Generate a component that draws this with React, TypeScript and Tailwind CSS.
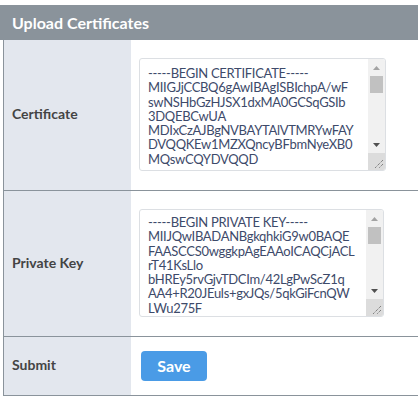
import { useState } from "react"

const CERT = `-----BEGIN CERTIFICATE-----
MIIGJjCCBQ6gAwIBAgISBIchpA/wF
swNSHbGzHJSX1dxMA0GCSqGSIb
3DQEBCwUA
MDIxCzAJBgNVBAYTAlVTMRYwFAY
DVQQKEw1MZXQncyBFbmNyeXB0
MQswCQYDVQQD
EwJSMzAeFw0yMjA5MTIxMDE0
MjBaFw0yMjEyMTExMDE0MTla
MBcxFTATBgNVBAMTDGV4YW1w
-----END CERTIFICATE-----`

const KEY = `-----BEGIN PRIVATE KEY-----
MIIJQwIBADANBgkqhkiG9w0BAQE
FAASCCS0wggkpAgEAAoICAQCjACL
rT41KsLlo
bHREy5rvGjvTDCIm/42LgPwScZ1q
AA4+R20JEuls+gxJQs/5qkGiFcnQW
LWu275F
kF2cQ8vR0pXmN3hYt6LsWq1e
Zb7uAo9GdTf4KjE2yPiV0cNw
-----END PRIVATE KEY-----`

const font = { fontFamily: '"Source Sans Pro", Lato, "Liberation Sans", sans-serif' }

function Row({ label, children, pad }: { label: string; children: React.ReactNode; pad: string }) {
  return (
    <div className="grid grid-cols-[127px_1fr] border-b border-[#8a939b]">
      <div className="bg-[#e3e7ee] pl-2 pb-[3px] flex items-center text-[14px] font-bold text-[#444]">{label}</div>
      <div className={`pl-2 ${pad}`}>{children}</div>
    </div>
  )
}

// classic scrollbar look, drawn next to the textarea
function Scrollbar() {
  return (
    <div className="w-[17px] flex flex-col bg-[#f1f1f1] shrink-0">
      <div className="h-[17px] flex items-center justify-center">
        <svg width="7" height="4" viewBox="0 0 7 4">
          <polygon points="0,4 7,4 3.5,0" fill="#a3a3a3" />
        </svg>
      </div>
      <div className="flex-1 px-[2px]">
        <div className="h-[17px] bg-[#c1c1c1]" />
      </div>
      <div className="h-[17px] flex items-center justify-center">
        <svg width="7" height="4" viewBox="0 0 7 4">
          <polygon points="0,0 7,0 3.5,4" fill="#505050" />
        </svg>
      </div>
      <div className="h-[17px] bg-[#dcdcdc] flex items-end justify-end p-[2px]">
        <svg width="9" height="9" viewBox="0 0 9 9">
          <line x1="9" y1="1" x2="1" y2="9" stroke="#5a5a5a" strokeWidth="1" strokeDasharray="1 1" />
          <line x1="9" y1="5" x2="5" y2="9" stroke="#5a5a5a" strokeWidth="1" strokeDasharray="1 1" />
        </svg>
      </div>
    </div>
  )
}

function CertArea({
  value,
  onChange,
  size,
  inner,
}: {
  value: string
  onChange: (v: string) => void
  size: string
  inner: string
}) {
  return (
    <div className={`flex border border-[#dcdfe3] rounded-[3px] overflow-hidden ${size}`}>
      <textarea
        value={value}
        onChange={(e) => onChange(e.target.value)}
        className={`flex-1 min-w-0 resize-none overflow-hidden whitespace-pre pl-2 text-[13px] tracking-[-0.3px] leading-[14.3px] text-[#3d4a6a] outline-none ${inner}`}
        style={font}
      />
      <Scrollbar />
    </div>
  )
}

export default function App() {
  const [cert, setCert] = useState(CERT)
  const [key, setKey] = useState(KEY)

  return (
    <div className="pt-[5px] bg-white min-h-screen" style={font}>
      <div className="h-[35px] bg-[#8a939b] pl-3 flex items-center text-white font-bold text-[16px]">
        Upload Certificates
      </div>
      <div className="ml-[3px] border-l border-[#8a939b]">
        <Row label="Certificate" pad="pt-[18px] pb-[19px]">
          <CertArea value={cert} onChange={setCert} size="w-[247px] h-[113px]" inner="pt-[7px] mb-[3px]" />
        </Row>
        <Row label="Private Key" pad="pt-[18px] pb-[19px]">
          <CertArea value={key} onChange={setKey} size="w-[245px] h-[108px]" inner="pt-[5px]" />
        </Row>
        <Row label="Submit" pad="py-[14px]">
          <button className="ml-[2px] w-[66px] h-[30px] rounded-[4px] bg-[#4a9be6] text-white font-bold text-[16px]">
            Save
          </button>
        </Row>
      </div>
    </div>
  )
}
